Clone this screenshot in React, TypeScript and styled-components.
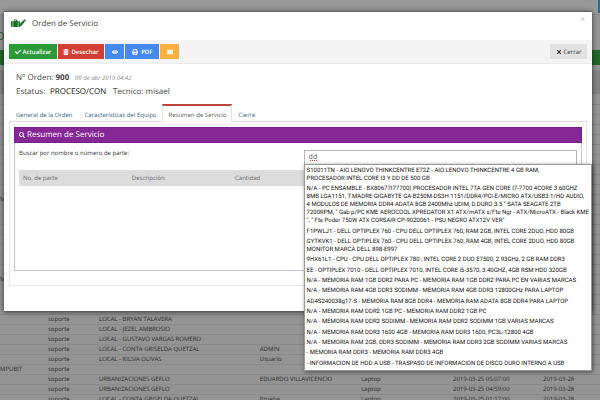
import React, { useState } from "react";
import styled, { createGlobalStyle, css } from "styled-components";
import { FaCheck, FaTrashAlt, FaEye, FaPrint, FaEnvelope, FaTimes, FaSearch } from "react-icons/fa";

const GlobalStyle = createGlobalStyle`
  * { box-sizing: border-box; }
  html, body { margin: 0; padding: 0; }
  body {
    font-family: "Open Sans", sans-serif;
    font-size: 6px;
    line-height: 10px;
    color: #333;
    background: #949494;
    overflow: hidden;
    text-rendering: geometricPrecision;
  }
  button, input { font-family: inherit; text-rendering: inherit; }
`;

const Page = styled.div`
  position: relative;
  height: 100vh;
  overflow: hidden;
`;

const SiteBar = styled.div`
  display: flex;
  justify-content: flex-end;
  height: 15px;
  background: #989898;
  border-bottom: 1px solid #858585;
`;

const SiteUser = styled.div`
  width: 2px;
  height: 13px;
  background: #356a8c;
`;

const SiteTitle = styled.h1`
  margin: 0;
  height: 35px;
  padding-top: 16px;
  font-size: 11px;
  line-height: 12px;
  font-weight: 400;
  color: #1f5a24;
  background: #949494;
  text-indent: -4px;
`;

const SitePanelHeading = styled.div`
  height: 15px;
  background: #23662a;
`;

const SiteFilter = styled.div`
  height: 29px;
  border-top: 5px solid #949494;
  background: #838383;
`;

const OrdersTable = styled.table`
  width: 100%;
  table-layout: fixed;
  border-collapse: collapse;
  color: #2a2a2a;
`;

const OrdersCell = styled.td<{ $width: string }>`
  width: ${(p) => p.$width};
  height: 10px;
  padding: 0;
  font-size: 6px;
  line-height: 9px;
  white-space: nowrap;
  border-bottom: 1px solid #8a8a8a;
`;

const Backdrop = styled.div`
  position: absolute;
  inset: 0;
  padding: 11px 8px 0 4px;
`;

const Dialog = styled.section`
  padding-bottom: 25px;
  background: #fff;
  border-top: 1px solid #666;
  box-shadow: 0 1px 5px rgba(0, 0, 0, 0.65);
`;

const DialogHeader = styled.header`
  display: flex;
  align-items: center;
  gap: 6px;
  height: 28px;
  padding: 0 7px 5px;
`;

const DialogTitle = styled.h2`
  flex: 1;
  margin: 0;
  font-size: 8px;
  line-height: 12px;
  font-weight: 400;
  color: #444;
`;

const DismissButton = styled.button`
  align-self: flex-start;
  margin-top: 3px;
  padding: 0;
  border: 0;
  background: none;
  font-size: 8px;
  line-height: 10px;
  color: #bbb;
`;

const Toolbar = styled.div`
  display: flex;
  gap: 1px;
  height: 24px;
  padding: 4px 5px;
  background: #f4f4f4;
  border-bottom: 1px solid #ececec;
`;

const ToolButton = styled.button<{ $color: string; $width: number; $neutral?: boolean }>`
  display: flex;
  align-items: center;
  justify-content: center;
  gap: 2px;
  width: ${(p) => p.$width}px;
  height: 15px;
  padding: 0;
  border: 0;
  background: ${(p) => p.$color};
  color: #fff;
  font-size: 6px;
  font-weight: 600;
  line-height: 10px;
  white-space: nowrap;
  ${(p) =>
    p.$neutral &&
    css`
      margin-left: auto;
      color: #333;
      font-weight: 400;
    `}
`;

const Summary = styled.div`
  padding: 7px 12px 0;
  font-size: 8px;
  line-height: 14px;
  color: #444;
`;

const SummaryLine = styled.div`
  display: flex;
  align-items: center;
  height: 14px;
`;

const OrderNumber = styled.span`
  width: 59px;
`;

const OrderDate = styled.em`
  font-size: 6px;
  color: #888;
`;

const StatusLabel = styled.label`
  width: 34px;
`;

const StatusInput = styled.input`
  width: 57px;
  height: 14px;
  margin-right: 6px;
  padding: 0;
  border: 0;
  background: none;
  font-size: 8px;
  line-height: 14px;
  color: #111;
`;

const Tabs = styled.nav`
  display: flex;
  margin: 5px 5px 0;
  padding-left: 1px;
  border-bottom: 1px solid #e0e0e0;
`;

const Tab = styled.a<{ $active?: boolean }>`
  height: 18px;
  margin-bottom: -1px;
  padding: 4px 5px 0;
  border: 1px solid transparent;
  border-top: 2px solid transparent;
  font-size: 6px;
  line-height: 10px;
  text-decoration: none;
  white-space: nowrap;
  color: #2f6286;
  ${(p) =>
    p.$active &&
    css`
      color: #555;
      background: #fff;
      border-color: #b9473f #e0e0e0 #fff;
    `}
`;

const TabPane = styled.div`
  margin: 0 5px;
  padding: 5px 4px 14px;
  border: 1px solid #e6e6e6;
  border-top: 0;
`;

const Panel = styled.section`
  border: 1px solid #d5bfdd;
  border-top: 0;
`;

const PanelHeading = styled.h3`
  display: flex;
  align-items: center;
  gap: 2px;
  height: 16px;
  margin: 0 -1px;
  padding: 0 4px;
  background: #862796;
  border: 1px solid #76208a;
  color: #fff;
  font-size: 8px;
  line-height: 12px;
  font-weight: 400;
`;

const PanelBody = styled.div`
  padding: 7px 4px 84px;
`;

const SearchRow = styled.div`
  display: flex;
  justify-content: space-between;
`;

const SearchLabel = styled.label`
  line-height: 6px;
`;

const SearchField = styled.div`
  position: relative;
  width: 49%;
`;

const SearchInput = styled.input`
  display: block;
  width: 100%;
  height: 15px;
  padding: 0 4px;
  border: 1px solid #b5b5b5;
  border-radius: 0;
  background: #fff;
  font-size: 7px;
  color: #555;
  text-decoration: underline dotted #d33;
`;

const Suggestions = styled.ul`
  position: absolute;
  top: 14px;
  left: 0;
  right: -15px;
  z-index: 2;
  display: flex;
  flex-direction: column;
  justify-content: space-between;
  height: 207px;
  margin: 0;
  padding: 2px;
  list-style: none;
  background: #fff;
  border: 1px solid #999;
  box-shadow: 1px 1px 4px rgba(0, 0, 0, 0.5);
`;

const Suggestion = styled.li`
  font-family: Roboto, "Liberation Sans", Arial, sans-serif;
  font-size: 6px;
  line-height: 8px;
  color: #111;
  white-space: pre;
`;

const PartsTable = styled.table`
  width: 100%;
  margin-top: 5px;
  table-layout: fixed;
  border-collapse: collapse;
  background: #dcdcdc;
`;

const PartsHeader = styled.th<{ $width?: string }>`
  width: ${(p) => p.$width ?? "auto"};
  height: 16px;
  padding: 0 4px;
  font-size: 6px;
  line-height: 10px;
  font-weight: 400;
  text-align: left;
  color: #666;
`;

const columnWidths = ["8%", "8.5%", "26.8%", "16.9%", "15.3%", "15%", "9.5%"];

const blank = ["", "", "", "", "", "", ""];

const orders: string[][] = [
  ...Array(10).fill(blank),
  ["M", "", "", "", "", "", ""],
  ...Array(7).fill(blank),
  ["M", "", "", "", "", "", ""],
  ...Array(3).fill(blank),
  ["", "soporte", "LOCAL - BRYAN TALAVERA", "", "", "", ""],
  ["", "soporte", "LOCAL - JEZEL AMBROSIO", "", "", "", ""],
  ["", "soporte", "LOCAL - GUSTAVO VARGAS ROMERO", "", "", "", ""],
  ["", "soporte", "LOCAL - CONTA GRISELDA QUETZAL", "ADMIN", "", "", ""],
  ["", "soporte", "LOCAL - KILSIA OLIVAS", "Usuario", "", "", ""],
  ["MPUBIT", "soporte", "", "", "", "", ""],
  ["", "soporte", "URBANIZACIONES GEFLO", "EDUARDO VILLAVICENCIO", "Laptop", "2019-03-25 05:07:00", "2019-03-28"],
  ["", "soporte", "URBANIZACIONES GEFLO", "", "Laptop", "2019-03-25 04:59:00", "2019-03-28"],
  ["", "soporte", "LOCAL - CONTA GRISELDA QUETZAL", "Prueba", "Laptop", "2019-03-25 01:17:00", "2019-03-28"],
];

const suggestions = [
  "S10011TN - AIO LENOVO THINKCENTRE E72Z - AIO LENOVO THINKCENTRE 4 GB RAM,\nPROCESADOR INTEL CORE I3 Y DD DE 500 GB",
  "N/A - PC ENSAMBLE - BX80677I77700) PROCESADOR INTEL 7TA GEN CORE I7-7700 4CORE 3.60GHZ\n8MB LGA1151, T.MADRE GIGABYTE GA-B250M-DS3H 1151/DDR4/PCI-E/MICRO ATX/USB3.1/HD AUDIO,\n4 MODULOS DE MEMORIA DDR4 ADATA 8GB 2400Mhz UDIM, D.DURO 3.5 \" SATA SEAGATE 2TB\n7200RPM, \" Gab p/PC KME AEROCOOL XPREDATOR X1 ATX/mATX s/Fte Ngr - ATX/MicroATX - Black KME\n\", \" Fte Poder 750W ATX CORSAIR CP-9020061 - PSU NEGRO ATX12V VER\"",
  "F1PWLJ1 - DELL OPTIPLEX 760 - CPU DELL OPTIPLEX 760, RAM 2GB, INTEL CORE 2DUO, HDD 80GB",
  "GYTKVK1 - DELL OPTIPLEX 760 - CPU DELL OPTIPLEX 760, RAM 4GB, INTEL CORE 2DUO, HDD 80GB\nMONITOR MARCA DELL 898-E997",
  "9HX61L1 - CPU - CPU DELL OPTIPLEX 780 , INTEL CORE 2 DUO E7500, 2.93GHz, 2 GB RAM DDR3",
  "EE - OPTIPLEX 7010 - DELL OPTIPLEX 7010, INTEL CORE i5-3570, 3.40GHZ, 4GB RSM HDD 320GB",
  "N/A - MEMORIA RAM 1GB DDR2 PARA PC - MEMORIA RAM 1GB DDR2 PARA PC EN VARIAS MARCAS",
  "N/A - MEMORIA RAM 4GB DDR3 SODIMM - MEMORIA RAM 4GB DDR3 12800GHz PARA LAPTOP",
  "AD4S240038g17-S - MEMORIA RAM 8GB DDR4 - MEMORIA RAM ADATA 8GB DDR4 PARA LAPTOP",
  "N/A - MEMORIA RAM DDR2 1GB PC - MEMORIA RAM DDR2 1GB PC",
  "N/A - MEMORIA RAM DDR2 SODIMM - MEMORIA RAM DDR2 SODIMM 1GB VARIAS MARCAS",
  "N/A - MEMORIA RAM DDR3 1600 4GB - MEMORIA RAM DDR3 1600, PC3L-12800 4GB",
  "N/A - MEMORIA RAM 2GB, DDR3 SODIMM - MEMORIA RAM DDR3 2GB SODIMM VARIAS MARCAS",
  "- MEMORIA RAM DDR3 - MEMORIA RAM DDR3 4GB",
  "- INFORMACION DE HDD A USB - TRASPASO DE INFORMACION DE DISCO DURO INTERNO A USB",
];

const tabs = ["General de la Orden", "Características del Equipo", "Resumen de Servicio", "Cierre"];

function BriefcasePencil() {
  return (
    <svg width="15" height="9" viewBox="0 0 15 9" fill="#14701c" aria-hidden="true">
      <path d="M0 3Q0 2 1 2H1.600V8H1Q0 8 0 7ZM2.200 2H3V1.200Q3 .5 3.700 .5H5.300Q6 .5 6 1.200V2H6.800V8H2.200ZM3.800 1.300V2H5.200V1.300ZM7.400 2H8Q9 2 9 3V7Q9 8 8 8H7.400Z" />
      <path d="M8.500 5.500L12.300 1.300L13.900 2.800L10 7L8 7.600ZM12.700 .9L13.300 .3Q13.600 0 14 .4L14.800 1.200Q15 1.500 14.700 1.900L14.200 2.400Z" />
    </svg>
  );
}

export default function App() {
  const [status, setStatus] = useState("PROCESO/CON");
  const [query, setQuery] = useState("dd");

  return (
    <Page>
      <GlobalStyle />
      <SiteBar>
        <SiteUser />
      </SiteBar>
      <SiteTitle>O</SiteTitle>
      <SitePanelHeading />
      <SiteFilter />
      <OrdersTable>
        <tbody>
          {orders.map((row, r) => (
            <tr key={r}>
              {row.map((text, c) => (
                <OrdersCell key={c} $width={columnWidths[c]}>
                  {text}
                </OrdersCell>
              ))}
            </tr>
          ))}
        </tbody>
      </OrdersTable>

      <Backdrop>
        <Dialog role="dialog" aria-labelledby="dialog-title">
          <DialogHeader>
            <BriefcasePencil />
            <DialogTitle id="dialog-title">Orden de Servicio</DialogTitle>
            <DismissButton aria-label="Cerrar ventana">×</DismissButton>
          </DialogHeader>
          <Toolbar>
            <ToolButton $color="#2b9a38" $width={48}><FaCheck size={6} />Actualizar</ToolButton>
            <ToolButton $color="#d43f35" $width={46}><FaTrashAlt size={6} />Desechar</ToolButton>
            <ToolButton $color="#4588ee" $width={19} aria-label="Ver"><FaEye size={6} /></ToolButton>
            <ToolButton $color="#4588ee" $width={34}><FaPrint size={6} />&nbsp;PDF</ToolButton>
            <ToolButton $color="#fbb040" $width={19} aria-label="Enviar"><FaEnvelope size={6} /></ToolButton>
            <ToolButton $color="#e2e2e2" $width={37} $neutral><FaTimes size={6} />Cerrar</ToolButton>
          </Toolbar>

          <Summary>
            <SummaryLine>
              <OrderNumber>N° Orden: <b>900</b></OrderNumber>
              <OrderDate>09 de abr 2019 04:42</OrderDate>
            </SummaryLine>
            <SummaryLine>
              <StatusLabel htmlFor="status">Estatus:</StatusLabel>
              <StatusInput id="status" value={status} onChange={(e) => setStatus(e.target.value)} />
              <span>Tecnico: misael</span>
            </SummaryLine>
          </Summary>

          <Tabs>
            {tabs.map((name, i) => (
              <Tab key={name} href="#" $active={i === 2}>{name}</Tab>
            ))}
          </Tabs>
          <TabPane>
            <Panel>
              <PanelHeading><FaSearch size={6} />Resumen de Servicio</PanelHeading>
              <PanelBody>
                <SearchRow>
                  <SearchLabel htmlFor="part">Buscar por nombre o número de parte:</SearchLabel>
                  <SearchField>
                    <SearchInput id="part" value={query} onChange={(e) => setQuery(e.target.value)} />
                    <Suggestions>
                      {suggestions.map((text) => (
                        <Suggestion key={text}>{text}</Suggestion>
                      ))}
                    </Suggestions>
                  </SearchField>
                </SearchRow>
                <PartsTable>
                  <thead>
                    <tr>
                      <PartsHeader $width="19.5%">No. de parte</PartsHeader>
                      <PartsHeader $width="18.5%">Descripción</PartsHeader>
                      <PartsHeader $width="22%">Cantidad</PartsHeader>
                      <PartsHeader />
                      <PartsHeader />
                    </tr>
                  </thead>
                </PartsTable>
              </PanelBody>
            </Panel>
          </TabPane>
        </Dialog>
      </Backdrop>
    </Page>
  );
}
